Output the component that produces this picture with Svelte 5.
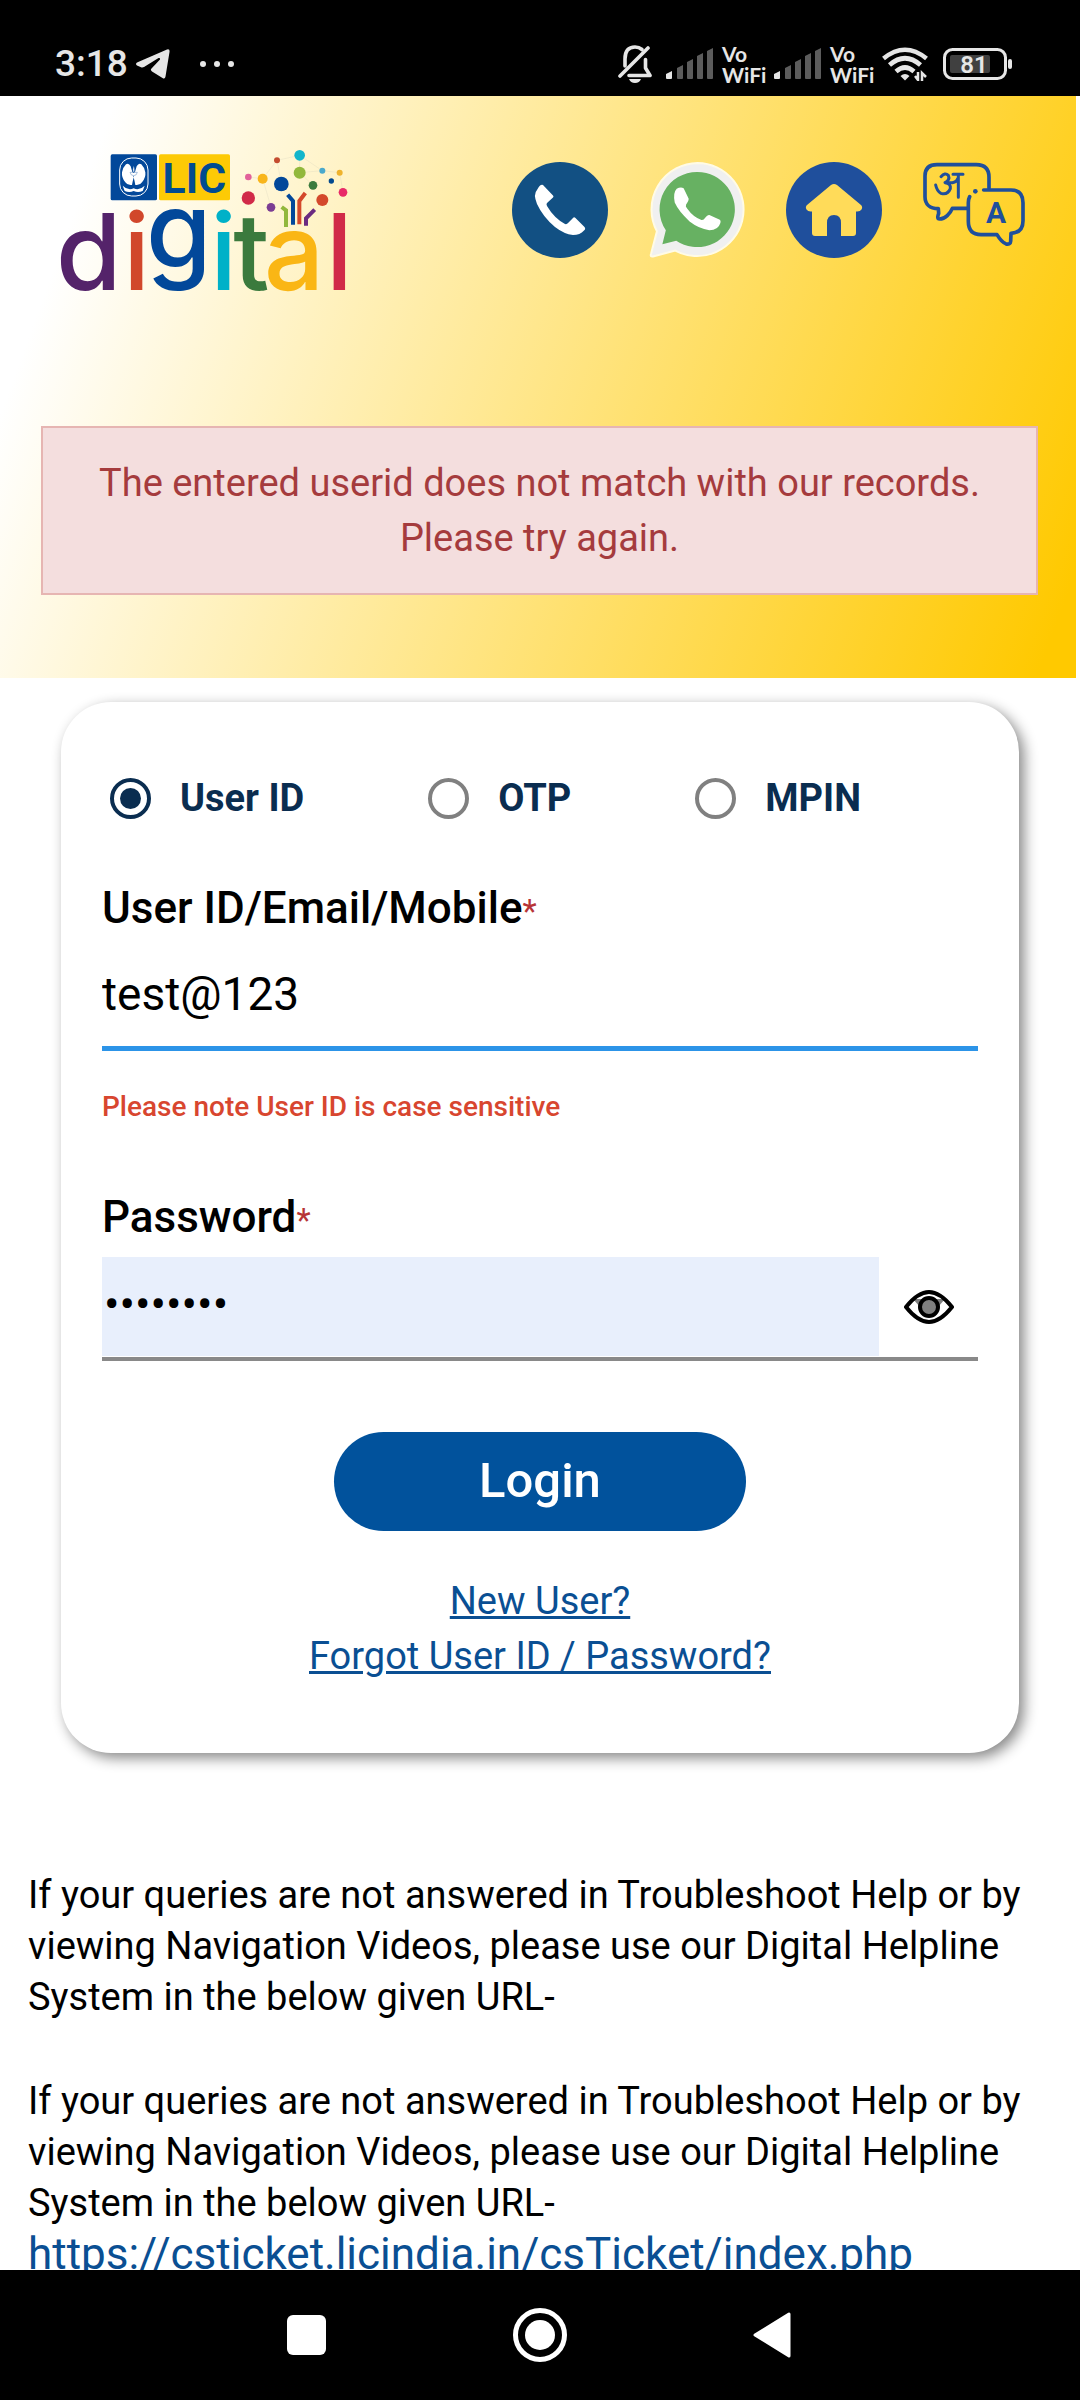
<script>
  let mode = $state('userid');
  let userId = $state('test@123');
  let password = $state('password');
  let visible = $state(false);

  const modes = [
    { id: 'userid', label: 'User ID' },
    { id: 'otp', label: 'OTP' },
    { id: 'mpin', label: 'MPIN' },
  ];

  const bars = [
    { x: 0, h: 8 },
    { x: 11, h: 14 },
    { x: 21, h: 20 },
    { x: 31, h: 26 },
    { x: 41, h: 31 },
  ];

  const help =
    'If your queries are not answered in Troubleshoot Help or by viewing Navigation Videos, please use our Digital Helpline System in the below given URL-';
</script>

{#snippet signal()}
  <svg class="signal" viewBox="0 0 48 32" aria-hidden="true">
    {#each bars as b, i}
      <path
        d="M{b.x} {34 - b.h}L{b.x + 6} {31 - b.h}V30Q{b.x + 6} 31 {b.x + 5} 31H{b.x + 1}Q{b.x} 31 {b.x} 30Z"
        fill={i === 0 ? '#e6e6e6' : '#5c5c5c'}
      />
    {/each}
  </svg>
  <span class="vowifi"><span>Vo</span><span>WiFi</span></span>
{/snippet}

<div class="screen">
  <div class="status">
    <div class="status-left">
      <span class="time">3:18</span>
      <svg class="telegram" viewBox="0 0 34 30" aria-hidden="true">
        <path d="M1 13.500L31 .4Q34 -.5 33.500 3L29.500 27.500Q29 30.500 26.500 29L16 22.500Q14 21 15.500 19.500L24 10.500Q24.500 8.500 22.500 9L8 18Q6.500 18.800 5 18.300L1 16.500Q-1 15 1 13.500Z" fill="#e6e6e6" />
      </svg>
      <svg class="dots" viewBox="0 0 34 8" aria-hidden="true">
        <g fill="#e6e6e6"><circle cx="3" cy="4" r="3" /><circle cx="17" cy="4" r="3" /><circle cx="31" cy="4" r="3" /></g>
      </svg>
    </div>
    <div class="status-right">
      <svg class="bell" viewBox="0 0 34 38" aria-hidden="true">
        <g fill="none" stroke="#e6e6e6" stroke-width="3.600" stroke-linecap="round" stroke-linejoin="round">
          <path d="M2 31L30 3" />
          <path d="M7 21V14Q7 2 17 2Q21 2 24 4.500" />
          <path d="M27.500 14.500V23L32 30.500H11" />
        </g>
        <path d="M11 34H23Q21.500 38 17 38T11 34Z" fill="#e6e6e6" />
      </svg>
      {@render signal()}
      {@render signal()}
      <svg class="wifi" viewBox="0 0 46 34" aria-hidden="true">
        <g fill="none" stroke="#e6e6e6" stroke-width="4.600">
          <path d="M1.500 11.500Q23 -6 44.500 11.500" />
          <path d="M7.500 18Q23 4.500 38.500 18" />
          <path d="M14 24.500Q23 16.500 32 24.500" />
        </g>
        <path d="M18.500 29Q23 25 27.500 29L23 33.500Z" fill="#e6e6e6" />
        <path d="M33 29L36 33V25M44 30L40 26V34" fill="none" stroke="#e6e6e6" stroke-width="2.500" />
      </svg>
      <svg class="battery" viewBox="0 0 70 32" aria-hidden="true">
        <rect x="1.500" y="1.500" width="61" height="29" rx="8" fill="none" stroke="#e6e6e6" stroke-width="3" />
        <rect x="7" y="7" width="40" height="18" rx="2" fill="#404040" />
        <rect x="65" y="11" width="4" height="10" rx="2" fill="#e6e6e6" />
        <text x="31" y="25" text-anchor="middle" fill="#e6e6e6" font-size="24" font-weight="600">81</text>
      </svg>
    </div>
  </div>

  <main>
    <header>
      <div class="brand-row">
        <svg class="logo" viewBox="60 56 864 426" role="img" aria-label="LIC digital">
          <rect x="212" y="72" width="139" height="138" rx="5" fill="#02489a" />
          <rect x="357" y="72" width="213" height="138" rx="5" fill="#fdca05" />
          <rect x="239" y="83" width="85" height="114" rx="36" fill="none" stroke="#fff" stroke-width="3" />
          <path d="M258 102Q266 96 272 108Q276 124 282 138Q278 152 276 164Q262 166 256 156Q244 142 246 126Q248 112 258 102ZM304 102Q296 96 290 108Q286 124 280 138Q284 152 286 164Q300 166 306 156Q318 142 316 126Q314 112 304 102Z" fill="#fff" />
          <path d="M281 106Q276 120 281 128Q286 120 281 106M270 126H292Q290 136 281 136T270 126" fill="#fff" stroke="#02489a" stroke-width="1" />
          <path d="M248 166Q264 182 281 174Q298 182 314 166L308 182Q294 188 281 182Q268 188 254 182Z" fill="#fff" />
          <text class="lic" x="463" y="187" text-anchor="middle" font-size="128" fill="#014b91">LIC</text>
          <g fill="none" stroke="#b9b9a8" stroke-opacity=".5" stroke-width="1">
            <path d="M711 90L779 75L847 121L899 127L909 186M668 145L711 90L724 160M668 145L693 230M779 127L847 121M779 127L819 165M625 140L668 145M779 75V127" />
          </g>
          <circle cx="779" cy="75" r="16" fill="#12b5cb" /><circle cx="711" cy="90" r="9" fill="#c44c2f" />
          <circle cx="779" cy="127" r="18" fill="#92b83c" /><circle cx="847" cy="121" r="9" fill="#4aa9cc" />
          <circle cx="899" cy="127" r="9" fill="#efb32c" /><circle cx="874" cy="152" r="8" fill="#03498f" />
          <circle cx="625" cy="140" r="10" fill="#e2619a" /><circle cx="668" cy="145" r="15" fill="#f8b51b" />
          <circle cx="724" cy="161" r="22" fill="#02489a" /><circle cx="819" cy="165" r="13" fill="#3c7b3e" />
          <circle cx="909" cy="186" r="13" fill="#e82a68" /><circle cx="847" cy="209" r="18" fill="#d4482b" />
          <circle cx="625" cy="203" r="20" fill="#d12a48" /><circle cx="693" cy="231" r="13" fill="#7b3d93" />
          <g fill="none" stroke-width="12">
            <path d="M725 230L738 240V290" stroke="#92b83c" />
            <path d="M743 193L759 212V283" stroke="#02489a" />
            <path d="M796 188L778 212V282" stroke="#d4482b" />
            <path d="M824 238L798 264V286" stroke="#6b2b81" />
          </g>
          <text class="word" font-size="318" y="478"><tspan x="48" fill="#54236a">d</tspan><tspan x="250" fill="#d1472b">i</tspan><tspan x="318" y="414" fill="#02489a">g</tspan><tspan x="511" y="478" fill="#00b1c8">i</tspan><tspan x="580" fill="#3b7a3d">t</tspan><tspan x="672" fill="#fab615">a</tspan><tspan x="858" fill="#d12a48">l</tspan></text>
        </svg>

        <nav class="actions" aria-label="Quick links">
          <a href="#call" aria-label="Call">
            <svg class="round" viewBox="0 0 96 96"><circle cx="48" cy="48" r="48" fill="#125083" />
              <path d="M31 23L41 33.500Q42 34.500 41 35.500L35 41Q34 42 35 44Q42 56 53 62Q55 62.500 56 61L61 56Q62 54.500 63.500 56L72.500 65Q74 67 72 68.500Q68 73 61 73Q52 72 43 65Q31 55 25 42Q21 32 25 28Q28 22 31 23Z" fill="#fff" />
            </svg>
          </a>
          <a href="#whatsapp" aria-label="WhatsApp">
            <svg class="round" viewBox="0 0 97 97">
              <path d="M49 1A47 47 0 1 1 26.500 89.500L4 95.500Q1 96 2 93L8 70A47 47 0 0 1 49 1Z" fill="#f0f0f0" stroke="#fffbe6" stroke-width="2" />
              <path d="M49 10A38 38 0 1 1 27.500 79.500L13.500 83L17 69A38 38 0 0 1 49 10Z" fill="#67b162" />
              <path d="M28 27Q32 25 35 26.500L40 37Q40.500 39 37.500 43Q36.500 45 38.500 47Q45 56 53 58.500Q55 59 57 56Q59 53 61 53.500L71 58Q73 59 72 62Q70 69 61 69Q50 67 41 60Q30 50 26 41Q24 31 28 27Z" fill="#fff" />
            </svg>
          </a>
          <a href="#home" aria-label="Home">
            <svg class="round" viewBox="0 0 96 96"><circle cx="48" cy="48" r="48" fill="#1f4f9c" />
              <path d="M45 23Q48 21 51 23L75 43Q77 45 75.500 47.500Q74 50 70 49.500V71Q70 74 67 74H55V61Q55 53 48 53T41 61V74H29Q26 74 26 71V49.500Q22 50 20.500 47.500Q19 45 21 43Z" fill="#ffdb59" />
            </svg>
          </a>
          <a href="#language" aria-label="Language">
            <svg class="lang" viewBox="24 18 306 252">
              <g fill="none" stroke="#1f4f9c" stroke-width="11" stroke-linecap="round" stroke-linejoin="round">
                <path d="M156 157H112C106 172 90 189 74 189C66 189 68 180 71 172L70 158C44 158 30 144 30 122V60Q30 26 66 26H184Q222 26 222 64V97" />
                <path d="M206 102H288Q324 102 324 140V194Q324 230 288 232L287 256C287 264 280 266 272 263C260 258 252 246 246 236H198Q160 236 160 196V140Q160 130 164 122" />
                <path stroke-width="9" d="M78 62Q90 48 100 58Q106 72 90 80Q108 82 106 98Q98 118 78 112Q66 106 62 87M92 80H112Q126 78 128 68M114 55H144M130 55V124" />
              </g>
              <circle cx="181" cy="106" r="7" fill="#1f4f9c" />
              <text x="243" y="200" text-anchor="middle" font-size="90" font-weight="700" fill="#1f4f9c">A</text>
            </svg>
          </a>
        </nav>
      </div>

      <div class="alert" role="alert">The entered userid does not match with our records. Please try again.</div>
    </header>

    <form class="card" onsubmit={(e) => e.preventDefault()}>
      <div class="modes" role="radiogroup" aria-label="Login with">
        {#each modes as m}
          <label class="mode">
            <input type="radio" name="mode" value={m.id} bind:group={mode} />
            <span>{m.label}</span>
          </label>
        {/each}
      </div>

      <div class="field">
        <label class="caption" for="uid">User ID/Email/Mobile<span class="req">*</span></label>
        <input id="uid" class="text" type="text" bind:value={userId} />
      </div>
      <p class="note">Please note User ID is case sensitive</p>

      <div class="field secret">
        <label class="caption" for="pwd">Password<span class="req">*</span></label>
        <div class="pwd-row">
          <input id="pwd" class="pwd" type={visible ? 'text' : 'password'} bind:value={password} />
          <button type="button" class="eye" aria-label="Show password" onclick={() => (visible = !visible)}>
            <svg viewBox="0 0 50 34" aria-hidden="true">
              <path d="M9 9H41L34 17H16Z" fill="#808080" />
              <circle cx="25" cy="17" r="9" fill="#808080" stroke="#000" stroke-width="4" />
              <path d="M2 17Q14 2 25 2T48 17Q36 32 25 32T2 17Z" fill="none" stroke="#000" stroke-width="4" stroke-linejoin="round" />
            </svg>
          </button>
        </div>
      </div>

      <button type="submit" class="login">Login</button>
      <div class="links">
        <a href="#new">New User?</a>
        <a href="#forgot">Forgot User ID / Password?</a>
      </div>
    </form>

    <section class="help">
      <p>{help}</p>
      <p>{help}</p>
      <a href="#ticket">https://csticket.licindia.in/csTicket/index.php</a>
    </section>
  </main>

  <div class="sysnav">
    <button aria-label="Recent apps"><svg viewBox="0 0 54 54"><rect x="7" y="7" width="39" height="40" rx="6" fill="#fff" /></svg></button>
    <button aria-label="Home"><svg viewBox="0 0 54 54"><circle cx="27" cy="27" r="24.500" fill="none" stroke="#fff" stroke-width="5" /><circle cx="27" cy="27" r="15" fill="#fff" /></svg></button>
    <button aria-label="Back"><svg viewBox="0 0 54 54"><path d="M43 6V48L9 27Z" fill="#fff" stroke="#fff" stroke-width="3" stroke-linejoin="round" /></svg></button>
  </div>
</div>

<style>
  :global(body) {
    background: #fff;
  }
  * {
    box-sizing: border-box;
  }
  .screen {
    display: flex;
    flex-direction: column;
    height: 100vh;
    font-family: Roboto, 'Liberation Sans', sans-serif;
    font-size: 38px;
    color: #000;
  }
  svg {
    display: block;
    flex: none;
  }
  .status {
    flex: none;
    display: flex;
    justify-content: space-between;
    align-items: center;
    height: 96px;
    padding: 32px 67px 0 55px;
    background: #000;
    color: #e6e6e6;
  }
  .status-left,
  .status-right {
    display: flex;
    align-items: center;
  }
  .time {
    font-size: 37px;
    line-height: 44px;
    font-weight: 500;
  }
  .telegram {
    width: 34px;
    height: 30px;
    margin-left: 8px;
  }
  .dots {
    width: 34px;
    height: 8px;
    margin-left: 30px;
  }
  .status-right {
    gap: 8px;
  }
  .bell {
    width: 34px;
    height: 38px;
    margin-right: 6px;
  }
  .signal {
    width: 48px;
    height: 32px;
  }
  .vowifi {
    display: flex;
    flex-direction: column;
    width: 44px;
    font-family: Lato, sans-serif;
    font-size: 21px;
    line-height: 21px;
    font-weight: 700;
  }
  .wifi {
    width: 46px;
    height: 34px;
  }
  .battery {
    width: 70px;
    height: 32px;
    margin-left: 7px;
  }
  main {
    flex: 1;
    min-height: 0;
    overflow: hidden;
  }
  header {
    margin-right: 4px;
    padding: 53px 38px 83px 41px;
    background: linear-gradient(110deg, #fff 9%, #ffc900 97%);
  }
  .brand-row {
    display: flex;
    justify-content: space-between;
    align-items: flex-start;
    padding: 0 13px 0 19px;
  }
  .logo {
    width: 288px;
    height: 142px;
    overflow: visible;
  }
  .lic {
    font-weight: 700;
  }
  .word {
    font-family: Inter, sans-serif;
    font-weight: 500;
  }
  .actions {
    display: flex;
    gap: 41px;
    padding-top: 13px;
  }
  .round {
    width: 96px;
    height: 96px;
  }
  .lang {
    width: 102px;
    height: 84px;
  }
  .alert {
    margin-top: 135px;
    padding: 28px 30px 27px;
    border: 2px solid #e6b5b2;
    background: #f4dede;
    color: #a53b3d;
    line-height: 55px;
    text-align: center;
  }
  .card {
    display: flex;
    flex-direction: column;
    margin: 24px 61px 0;
    padding: 68px 41px 69px;
    border-radius: 50px;
    background: #fff;
    box-shadow: 5px 5px 14px #888;
  }
  .modes {
    display: flex;
    gap: 124px;
    padding-left: 8px;
  }
  .mode {
    display: flex;
    align-items: center;
    gap: 29px;
    font-weight: 700;
    line-height: 56px;
    color: #0a2d50;
  }
  .mode input {
    appearance: none;
    display: grid;
    place-items: center;
    width: 41px;
    height: 41px;
    margin: 0;
    border: 4px solid #808080;
    border-radius: 50%;
  }
  .mode input:checked {
    border-color: #0a2d50;
  }
  .mode input:checked::before {
    content: '';
    width: 21px;
    height: 21px;
    border-radius: 50%;
    background: #0a2d50;
  }
  .field {
    display: flex;
    flex-direction: column;
    margin-top: 54px;
  }
  .secret {
    margin-top: 65px;
  }
  .caption {
    font-size: 44px;
    line-height: 56px;
    font-weight: 500;
  }
  .req {
    font-size: 33px;
    line-height: 33px;
    font-weight: 400;
    color: #b73437;
  }
  .text {
    width: 100%;
    height: 115px;
    padding: 6px 0 0;
    border: 0;
    border-bottom: 5px solid #2c94e8;
    outline: 0;
    background: none;
    font: inherit;
    font-size: 46px;
  }
  .note {
    margin: 39px 0 0;
    font-size: 28px;
    line-height: 34px;
    font-weight: 500;
    color: #d8462f;
  }
  .pwd-row {
    display: flex;
    margin-top: 12px;
    border-bottom: 4px solid #898989;
  }
  .pwd {
    flex: 1;
    min-width: 0;
    height: 99px;
    margin-bottom: 1px;
    padding: 0 2px 5px;
    border: 0;
    outline: 0;
    background: #e8effc;
    font: inherit;
    font-size: 46px;
  }
  .eye {
    display: grid;
    place-items: center;
    width: 99px;
    padding: 0;
    border: 0;
    background: none;
  }
  .eye svg {
    width: 50px;
    height: 34px;
  }
  .login {
    align-self: center;
    width: 47%;
    height: 99px;
    margin-top: 71px;
    padding: 0 0 3px;
    border: 0;
    border-radius: 50px;
    background: #01529c;
    color: #fff;
    font: inherit;
    font-size: 49px;
    font-weight: 500;
  }
  .links {
    display: flex;
    flex-direction: column;
    align-items: center;
    margin-top: 43px;
    line-height: 55px;
  }
  .links a,
  .help a {
    color: #0a4f93;
  }
  .help {
    padding: 117px 28px 0;
    line-height: 51px;
  }
  .help p {
    margin: 0 0 53px;
  }
  .help p + p {
    margin: 0;
  }
  .help a {
    font-size: 44px;
    text-decoration: none;
  }
  .sysnav {
    flex: none;
    display: flex;
    justify-content: center;
    align-items: center;
    gap: 179px;
    height: 130px;
    background: #000;
  }
  .sysnav button {
    padding: 0;
    border: 0;
    background: none;
  }
  .sysnav svg {
    width: 54px;
    height: 54px;
  }
</style>
